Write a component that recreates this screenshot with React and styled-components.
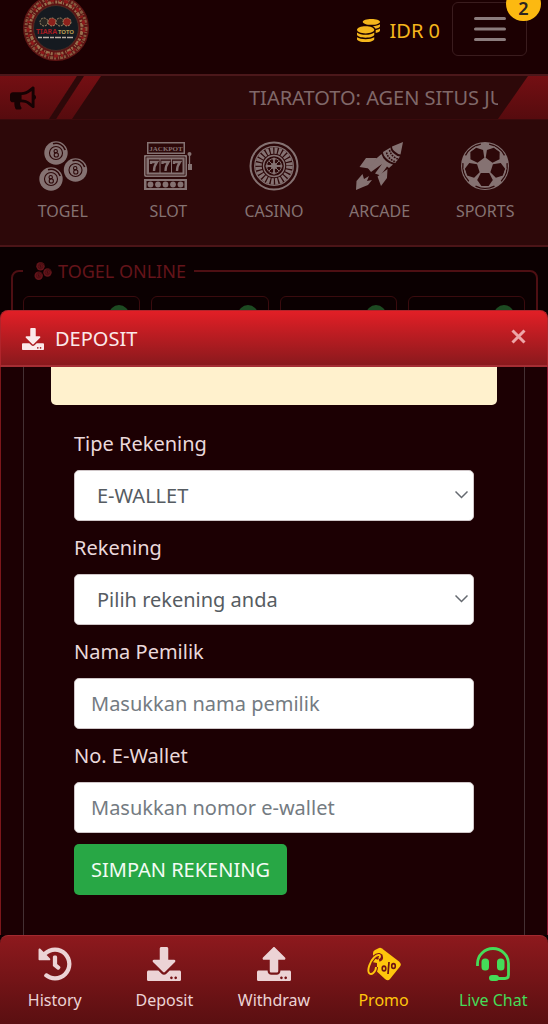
import React from "react";
import styled, { createGlobalStyle } from "styled-components";
import { FaBullhorn, FaCoins, FaDownload, FaHistory, FaUpload } from "react-icons/fa";

const GlobalStyle = createGlobalStyle`
  *, *::before, *::after { box-sizing: border-box; }
  body {
    margin: 0;
    background: #0a0001;
    color: #e9d6d8;
    font-family: "Noto Sans", "Open Sans", sans-serif;
  }
  button, input, select { font: inherit; }
`;

const Page = styled.div`
  display: flex;
  flex-direction: column;
  min-height: 100vh;
  overflow: hidden;
`;

const TopBar = styled.header`
  display: flex;
  align-items: flex-start;
  height: 74px;
  padding: 2px 21px 0 23px;
  background: #1c0002;
`;

const LogoLink = styled.a`
  display: block;
  margin-top: -7px;
  margin-right: auto;
  svg { display: block; }
`;

const Balance = styled.div`
  display: flex;
  align-items: center;
  gap: 10px;
  height: 56px;
  margin-right: 12px;
  color: #f4b61c;
  font-size: 20px;
`;

const MenuButton = styled.button`
  position: relative;
  display: grid;
  place-items: center;
  width: 75px;
  height: 54px;
  padding: 0;
  border: 1px solid #3a1c1e;
  border-radius: 6px;
  background: transparent;
  color: #8b7c7d;
`;

const Badge = styled.span`
  position: absolute;
  top: -16px;
  right: -15px;
  width: 35px;
  height: 34px;
  padding-top: 12px;
  border-radius: 17px;
  background: #fcb911;
  color: #2c2520;
  font-size: 18px;
  font-weight: 600;
  line-height: 18px;
`;

const Ticker = styled.div`
  display: flex;
  justify-content: space-between;
  height: 46px;
  border-top: 2px solid #4b171a;
  border-bottom: 1px solid #3a0a0c;
  background: #2d0809;
`;

const TickerStart = styled.div`
  display: flex;
  align-items: center;
  flex: none;
  width: 101px;
  padding-left: 10px;
  background:
    linear-gradient(123deg, transparent 64px, #2d0809 65px, #2d0809 70px, transparent 71px),
    linear-gradient(#740f13, #560b0e);
  clip-path: polygon(0 0, 100% 0, 72px 100%, 0 100%);
  color: #150203;
`;

const TickerText = styled.div`
  flex: 1;
  min-width: 0;
  padding-left: 148px;
  overflow: hidden;
  color: #806869;
  font-size: 20px;
  line-height: 44px;
  white-space: nowrap;
`;

const TickerEnd = styled.div`
  flex: none;
  width: 50px;
  background: linear-gradient(#740f13, #560b0e);
  clip-path: polygon(30px 0, 100% 0, 100% 100%, 0 100%);
`;

const Categories = styled.nav`
  display: flex;
  height: 127px;
  padding: 21px 10px 0;
  border-bottom: 2px solid #4b1417;
  background: #2d0809;
`;

const Category = styled.a`
  display: flex;
  flex: 1;
  flex-direction: column;
  align-items: center;
  gap: 8px;
  color: #857272;
  font-size: 16px;
  line-height: 24px;
  text-decoration: none;
`;

const LobbyWindow = styled.div`
  height: 63px;
  padding: 11px 10px 0 11px;
  overflow: hidden;
  background: #0b0001;
`;

const Lobby = styled.fieldset`
  min-width: 0;
  height: 160px;
  margin: 0;
  padding: 12px 11px 0 10px;
  border: 2px solid #4e0f13;
  border-radius: 8px;
`;

const LobbyTitle = styled.legend`
  display: flex;
  align-items: center;
  gap: 6px;
  padding: 0 8px 0 11px;
  color: #64141a;
  font-size: 18px;
  line-height: 26px;
`;

const LobbyCards = styled.div`
  display: grid;
  grid-template-columns: repeat(4, 1fr);
  gap: 11px;
`;

const LobbyCard = styled.div`
  display: flex;
  justify-content: flex-end;
  height: 90px;
  padding: 8px 10px;
  border: 1px solid #3a0b0e;
  border-radius: 6px;
`;

const OnlineDot = styled.span`
  width: 20px;
  height: 20px;
  border-radius: 50%;
  background: #1d4a22;
`;

const Sheet = styled.section`
  display: flex;
  flex: 1;
  flex-direction: column;
  border-radius: 8px 8px 0 0;
  background: #1c0003;
`;

const SheetHeader = styled.header`
  display: flex;
  align-items: center;
  gap: 11px;
  height: 57px;
  padding: 2px 21px 0 21px;
  border: 1px solid #b1242b;
  border-bottom: 2px solid #a52e34;
  border-radius: 8px 8px 0 0;
  background: linear-gradient(#e21f26, #8a191d);
  color: #fbe9ea;
`;

const SheetTitle = styled.h1`
  flex: 1;
  margin: 0;
  font-size: 20px;
  font-weight: 400;
  line-height: 32px;
`;

const CloseButton = styled.button`
  display: grid;
  padding: 0;
  margin-bottom: 6px;
  border: 0;
  background: transparent;
  color: #eda5a7;
`;

const SheetBody = styled.div`
  display: flex;
  flex: 1;
  padding: 0 22px;
  border-right: 1px solid #8d1430;
  border-left: 1px solid #7c171b;
`;

const Panel = styled.div`
  flex: 1;
  min-width: 0;
  padding: 0 27px 40px;
  border-right: 1px solid #443033;
  border-left: 1px solid #443033;
`;

const Notice = styled.div`
  height: 38px;
  border-radius: 0 0 5px 5px;
  background: #fff1cd;
`;

const Form = styled.form`
  display: flex;
  flex-direction: column;
  align-items: stretch;
  gap: 11px;
  padding: 23px 23px 0;
`;

const Field = styled.div`
  display: flex;
  flex-direction: column;
  gap: 10px;
`;

const Label = styled.label`
  color: #ead9db;
  font-size: 20px;
  line-height: 32px;
`;

const controlStyle = `
  width: 100%;
  height: 51px;
  border: 1px solid #cfc6c8;
  border-radius: 5px;
  background: #ffffff;
  color: #565c62;
  font-size: 20px;
  line-height: 32px;
`;

const TextInput = styled.input`
  ${controlStyle}
  padding: 0 16px;
  &::placeholder { color: #747b82; opacity: 1; }
`;

const SelectWrap = styled.div`
  position: relative;
  svg {
    position: absolute;
    top: 20px;
    right: 6px;
    pointer-events: none;
  }
`;

const Select = styled.select`
  ${controlStyle}
  padding: 0 32px 0 22px;
  appearance: none;
`;

const SubmitButton = styled.button`
  align-self: flex-start;
  height: 51px;
  padding: 0 17px;
  border: 0;
  border-radius: 5px;
  background: #28a745;
  color: #f3fbf4;
  font-size: 20px;
`;

const BottomNav = styled.nav`
  display: flex;
  height: 89px;
  padding-top: 11px;
  border-top: 1px solid #a12a30;
  border-radius: 8px 8px 0 0;
  background: linear-gradient(#8d191d, #5a0f11);
`;

const NavItem = styled.a`
  display: flex;
  flex: 1;
  flex-direction: column;
  align-items: center;
  gap: 7px;
  color: ${(p) => p.$color || "#ecd3d5"};
  font-size: 16px;
  line-height: 24px;
  text-decoration: none;
`;

function Logo() {
  return (
    <svg width="66" height="66" viewBox="0 0 66 66" role="img" aria-label="Tiara Toto">
      <circle cx="33" cy="33" r="33" fill="#5e1414" />
      <circle cx="33" cy="33" r="30" fill="none" stroke="#84583e" strokeWidth="3" strokeDasharray="3 1 1 2 2 1" />
      <circle cx="33" cy="33" r="26" fill="none" stroke="#97704e" strokeWidth="3" strokeDasharray="2 1 4 1 1 2" />
      <circle cx="33" cy="33" r="28" fill="none" stroke="#8c1719" strokeWidth="3" strokeDasharray="4 5 2 3" />
      <circle cx="33" cy="33" r="22.500" fill="#151a20" stroke="#4c2a22" />
      {[21, 29, 37, 44].map((x, i) => (
        <circle key={x} cx={x} cy="27" r="4" fill={i % 2 ? "#8d211c" : "#282622"} stroke="#a18c68" strokeDasharray="2 1" />
      ))}
      <text x="13" y="39" fontSize="7" fontWeight="700" fill="#a31b20">TIARA</text>
      <text x="35" y="39" fontSize="6" fontWeight="700" fill="#b59a54">TOTO</text>
      <path d="M15 42.500h36" stroke="#b9aaa0" strokeWidth="1.500" strokeDasharray="4 1 6 1" />
    </svg>
  );
}

function Ball({ x, y }) {
  return (
    <g transform={`translate(${x} ${y})`}>
      <circle r="11.700" fill="currentColor" />
      <circle r="6.500" fill="none" stroke="#2d0809" strokeWidth="1.100" />
      <path d="M-3-9.200A9.700 9.700 0 0 1 9.200-3" fill="none" stroke="#2d0809" strokeWidth="1.600" />
      <circle cx="-.300" cy="-1.800" r="1.700" fill="none" stroke="#2d0809" strokeWidth="1.100" />
      <circle cx=".300" cy="1.900" r="2.100" fill="none" stroke="#2d0809" strokeWidth="1.100" />
    </g>
  );
}

function BallsIcon({ size = 50 }) {
  return (
    <svg width={size} height={size} viewBox="0 0 50 50" aria-hidden="true">
      <Ball x={18} y={12} />
      <Ball x={37.5} y={29} />
      <Ball x={13} y={38} />
    </svg>
  );
}

function SlotIcon() {
  return (
    <svg width="50" height="50" viewBox="0 0 50 50" aria-hidden="true">
      <path fill="currentColor" d="M4 1h38v12H4zM2 14h41q1 0 1 1v19q0 2-2 2H3q-2 0-2-2V15q0-1 1-1zM1 38h43v11H1z" />
      <path fill="#2d0809" d="M5.500 2.500h35v9h-35zM3.500 40h38v7h-38z" />
      <path fill="none" stroke="#2d0809" strokeWidth=".800" d="M3 16h39v18H3z" />
      <text x="23" y="9.500" textAnchor="middle" fontFamily="Liberation Serif" fontSize="7" fontWeight="700" fill="currentColor">JACKPOT</text>
      {[6, 17.5, 29].map((x) => (
        <g key={x}>
          <path fill="#2d0809" d={`M${x} 18.500h10.500v13H${x}z`} />
          <path fill="none" stroke="currentColor" strokeWidth="2.400" d={`M${x + 2} 23v-2h6q-3 4-3 9`} />
        </g>
      ))}
      {[7.5, 15, 22.5, 30, 37.500].map((x) => (
        <circle key={x} cx={x} cy="43.500" r="2.900" fill="currentColor" />
      ))}
      <circle cx="46.500" cy="13" r="2" fill="currentColor" />
      <path d="M46.500 14v10" stroke="currentColor" strokeWidth="1.300" />
      <path d="M45 23h4v6h-4z" fill="currentColor" />
    </svg>
  );
}

function RouletteIcon() {
  return (
    <svg width="50" height="50" viewBox="0 0 50 50" fill="none" stroke="currentColor" aria-hidden="true">
      <circle cx="25" cy="25" r="23.500" strokeWidth="2" />
      <circle cx="25" cy="25" r="19.300" strokeWidth="1.300" />
      <circle cx="25" cy="25" r="15.500" strokeWidth="6.500" strokeDasharray="2.800 1.258" />
      <circle cx="25" cy="25" r="10.500" strokeWidth="1.300" />
      <circle cx="25" cy="25" r="7.500" strokeWidth="1" />
      <circle cx="25" cy="25" r="2.700" fill="currentColor" />
      <path d="M25 18v14M18 25h14" strokeWidth="1.800" />
      <path d="M20 20l10 10M30 20L20 30" strokeWidth="1" />
      {[[25, 18], [25, 32], [18, 25], [32, 25]].map(([x, y]) => (
        <circle key={`${x}-${y}`} cx={x} cy={y} r="1.500" fill="currentColor" stroke="none" />
      ))}
    </svg>
  );
}

function RocketIcon() {
  return (
    <svg width="50" height="50" viewBox="0 0 50 50" fill="currentColor" aria-hidden="true">
      <path d="M48 1L37 5.500q0 3 3.500 5.500 3 2.500 5 2.500z" />
      <path d="M35.500 6.500q0 3.500 4 6.500 3 2.500 5.500 2.500L40.500 22q-5-.500-8.500-4-4-3.500-4-7z" />
      <path d="M26.500 13q1 4 4.500 7 3 2.500 7 3.500l-4 3.500-2-1.500-6.500 9-5.500-2 7-9.500-11 8-4-5 11-10z" />
      <path d="M22 17H11L4.500 26l9.500 1.500zM32.500 28l-.500 9-6 8-3.500-9.500z" />
      <path d="M7.500 33L9 38l5-3-2 5 5-1-4 5-5 2-7 3 .500-9z" />
      <path d="M34.500 9q1 4 4 6.500 3 2.500 6 3M31.500 11.500q1 4 4 6.500 3 2.500 6 3" fill="none" stroke="#2d0809" strokeWidth="1.500" strokeDasharray="1.700 1" />
    </svg>
  );
}

function SoccerIcon() {
  return (
    <svg width="50" height="50" viewBox="0 0 50 50" aria-hidden="true">
      <circle cx="25" cy="25" r="24" fill="currentColor" />
      {[36, 108, 180, 252, 324].map((r) => (
        <g key={r} transform={`rotate(${r} 25 25)`}>
          <path d="M20.800 18h8.400l3.600-7-4.200-6h-7.200l-4.200 6z" fill="#2d0809" />
          <path d="M15.500 4.900A22.200 22.200 0 0 1 34.500 4.900" fill="none" stroke="#2d0809" strokeWidth="1.300" />
          <path d="M20.500 4.200h9" stroke="currentColor" strokeWidth="1" />
        </g>
      ))}
    </svg>
  );
}

function PromoIcon() {
  return (
    <svg width="34" height="34" viewBox="0 0 34 34" fill="none" aria-hidden="true">
      <path d="M6 6q0-2 2-3l4-2q1.500-.500 3 .500l17 13q3 2.500 1 5L23 32q-2 2.500-5 0L6 21z" fill="currentColor" />
      <path d="M0 14l10 2 0 13H0z" fill="#7f171b" />
      <path d="M9 12q2-4 5-3 1 3-2 4" stroke="#7c171a" strokeWidth="3.500" />
      <path d="M12 11.500c3-4-1-5-5-1C3 14.500 0 23 2 26c2 3 7-1 7-6" stroke="#7c171a" strokeWidth="4" />
      <path d="M12 11.500c3-4-1-5-5-1C3 14.500 0 23 2 26c2 3 7-1 7-6" stroke="currentColor" strokeWidth="1.900" />
      <path d="M22 15l-1 12" stroke="#6e1416" strokeWidth="1.700" />
      <ellipse cx="17" cy="21.500" rx="1.800" ry="2.400" stroke="#6e1416" strokeWidth="1.600" />
      <ellipse cx="26.500" cy="19" rx="1.800" ry="2.400" stroke="#6e1416" strokeWidth="1.600" />
    </svg>
  );
}

function HeadsetIcon() {
  return (
    <svg width="34" height="34" viewBox="0 0 34 34" fill="none" stroke="currentColor" aria-hidden="true">
      <path d="M1.500 19v-2.500a15.500 15 0 0 1 31 0V28q0 3.500-3.500 3.500H17" strokeWidth="2.800" />
      <rect x="5.500" y="11.500" width="7.500" height="12" rx="3.500" fill="currentColor" stroke="none" />
      <rect x="21" y="11.500" width="7.500" height="12" rx="3.500" fill="currentColor" stroke="none" />
      <rect x="13" y="28" width="10" height="6" rx="3" fill="currentColor" stroke="none" />
    </svg>
  );
}

const categories = [
  ["TOGEL", BallsIcon],
  ["SLOT", SlotIcon],
  ["CASINO", RouletteIcon],
  ["ARCADE", RocketIcon],
  ["SPORTS", SoccerIcon],
];

const navItems = [
  ["History", FaHistory],
  ["Deposit", FaDownload],
  ["Withdraw", FaUpload],
  ["Promo", PromoIcon, "#ffc60c"],
  ["Live Chat", HeadsetIcon, "#45dc58"],
];

function SelectField({ id, label, option }) {
  return (
    <Field>
      <Label htmlFor={id}>{label}</Label>
      <SelectWrap>
        <Select id={id}>
          <option>{option}</option>
        </Select>
        <svg width="13" height="10" viewBox="0 0 13 10" fill="none" stroke="#656a70" strokeWidth="1.500" aria-hidden="true">
          <path d="M.500 1.500l6 6 6-6" />
        </svg>
      </SelectWrap>
    </Field>
  );
}

function InputField({ id, label, placeholder }) {
  return (
    <Field>
      <Label htmlFor={id}>{label}</Label>
      <TextInput id={id} type="text" placeholder={placeholder} />
    </Field>
  );
}

export default function App() {
  return (
    <Page>
      <GlobalStyle />
      <TopBar>
        <LogoLink href="#home"><Logo /></LogoLink>
        <Balance><FaCoins size={23} /><span>IDR 0</span></Balance>
        <MenuButton type="button" aria-label="Menu">
          <svg width="32" height="24" viewBox="0 0 32 24" stroke="currentColor" strokeWidth="3" strokeLinecap="round" aria-hidden="true">
            <path d="M1.500 1.500h29M1.500 12h29M1.500 22.500h29" />
          </svg>
          <Badge>2</Badge>
        </MenuButton>
      </TopBar>
      <Ticker>
        <TickerStart><FaBullhorn size={26} /></TickerStart>
        <TickerText>TIARATOTO: AGEN SITUS JUDI</TickerText>
        <TickerEnd />
      </Ticker>
      <Categories>
        {categories.map(([name, Icon]) => (
          <Category key={name} href="#games"><Icon /><span>{name}</span></Category>
        ))}
      </Categories>
      <LobbyWindow>
        <Lobby>
          <LobbyTitle><BallsIcon size={18} />TOGEL ONLINE</LobbyTitle>
          <LobbyCards>
            {[1, 2, 3, 4].map((n) => <LobbyCard key={n}><OnlineDot /></LobbyCard>)}
          </LobbyCards>
        </Lobby>
      </LobbyWindow>
      <Sheet role="dialog" aria-labelledby="sheet-title">
        <SheetHeader>
          <FaDownload size={22} />
          <SheetTitle id="sheet-title">DEPOSIT</SheetTitle>
          <CloseButton type="button" aria-label="Close">
            <svg width="15" height="15" viewBox="0 0 15 15" stroke="currentColor" strokeWidth="3" aria-hidden="true">
              <path d="M1.500 1.500l12 12M13.500 1.500l-12 12" />
            </svg>
          </CloseButton>
        </SheetHeader>
        <SheetBody>
          <Panel>
            <Notice />
            <Form>
              <SelectField id="type" label="Tipe Rekening" option="E-WALLET" />
              <SelectField id="account" label="Rekening" option="Pilih rekening anda" />
              <InputField id="owner" label="Nama Pemilik" placeholder="Masukkan nama pemilik" />
              <InputField id="number" label="No. E-Wallet" placeholder="Masukkan nomor e-wallet" />
              <SubmitButton type="button">SIMPAN REKENING</SubmitButton>
            </Form>
          </Panel>
        </SheetBody>
      </Sheet>
      <BottomNav>
        {navItems.map(([name, Icon, color]) => (
          <NavItem key={name} href="#menu" $color={color}><Icon size={34} /><span>{name}</span></NavItem>
        ))}
      </BottomNav>
    </Page>
  );
}
